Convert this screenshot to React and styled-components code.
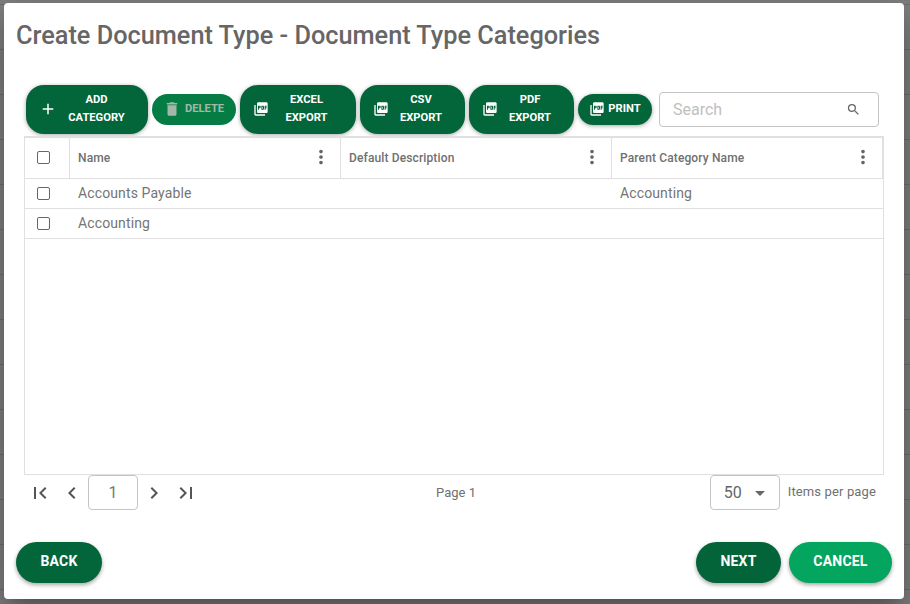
import React from 'react'
import styled, { createGlobalStyle } from 'styled-components'
import {
    MdAdd,
    MdDelete,
    MdPictureAsPdf,
    MdSearch,
    MdMoreVert,
    MdFirstPage,
    MdLastPage,
    MdChevronLeft,
    MdChevronRight,
    MdArrowDropDown,
    MdEdit,
    MdContentCopy
} from 'react-icons/md'

const GlobalStyle = createGlobalStyle`
    html, body {
        margin: 0;
        padding: 0;
        height: 100%;
        overflow: hidden;
        background: #fff;
        font-family: Roboto, "Liberation Sans", sans-serif;
    }
`

const Screen = styled.div`
    position: relative;
    width: 910px;
    height: 604px;
    overflow: hidden;
`

const BackPage = styled.div`
    display: flex;
    flex-direction: column;
    padding-top: 4px;
`

const BackRow = styled.div`
    display: grid;
    grid-template-columns: 87px 434px 1fr;
    flex: 0 0 44px;
    box-sizing: border-box;
    border-top: 1px solid #ddd;
    font-size: 16px;
    color: #333;
`

const BackCell = styled.div`
    display: flex;
    align-items: center;
    gap: 24px;
    padding-left: 8px;
    border-left: ${p => (p.$divided ? '1px solid #ddd' : 'none')};
    height: 44px;
    svg { flex: none; }
`

const Backdrop = styled.div`
    position: absolute;
    inset: 0;
    display: flex;
    padding: 3px 6px 5px 4px;
    background: rgba(0, 0, 0, .5);
`

const Dialog = styled.div`
    flex: 1;
    display: flex;
    flex-direction: column;
    background: #fff;
    border-radius: 4px;
    padding: 16px 12px 16px 12px;
    color: #666;
    box-shadow: 0 11px 15px -7px rgba(0, 0, 0, .2), 0 24px 38px 3px rgba(0, 0, 0, .14), 0 9px 46px 8px rgba(0, 0, 0, .12);
`

const Title = styled.h2`
    margin: 0 0 33px;
    height: 33px;
    line-height: 33px;
    font-size: 25.3px;
    font-weight: 500;
    color: #666;
`

const Toolbar = styled.div`
    display: flex;
    align-items: center;
    gap: 4px;
    height: 49px;
    margin: 0 0 2px 10px;
`

const ToolButton = styled.button`
    display: flex;
    align-items: center;
    flex: none;
    box-sizing: border-box;
    width: ${p => p.$width}px;
    height: ${p => (p.$tall ? 49 : 31)}px;
    padding: 0 ${p => (p.$tall ? 12 : 8)}px 1px ${p => (p.$tall ? 13 : 11)}px;
    border: none;
    border-radius: ${p => (p.$tall ? 18 : 15.5)}px;
    background: ${p => (p.disabled ? '#067c45' : '#03663a')};
    color: ${p => (p.disabled ? '#a3b8ab' : '#fff')};
    font-family: inherit;
    font-size: 11.2px;
    font-weight: 700;
    line-height: 18px;
    text-transform: uppercase;
    box-shadow: ${p => (p.disabled ? 'none' : '0 1px 4px rgba(0, 0, 0, .35)')};
    svg { flex: none; }
`

const ToolLabel = styled.span`
    flex: 1;
    text-align: center;
`

const SearchBox = styled.div`
    display: flex;
    align-items: center;
    justify-content: space-between;
    box-sizing: border-box;
    width: 220px;
    height: 35px;
    margin-left: 3px;
    padding: 0 17px 0 13px;
    border: 1px solid #c4c4c4;
    border-radius: 4px;
    font-size: 16px;
    color: #c0c0c0;
    svg { color: #666; }
`

const Grid = styled.div`
    display: flex;
    flex-direction: column;
    box-sizing: border-box;
    height: 339px;
    margin-left: 8px;
    width: 860px;
    border: 1px solid #e0e0e0;
    border-top-width: 2px;
`

const HeaderRow = styled.div`
    display: grid;
    grid-template-columns: 45px 271px 271px 1fr;
    height: 41px;
    box-sizing: border-box;
    border-bottom: 1px solid #e0e0e0;
    border-right: 1px solid #e0e0e0;
`

const HeaderCell = styled.div`
    display: flex;
    align-items: center;
    justify-content: space-between;
    padding: 0 8px 0 8px;
    border-right: ${p => (p.$last ? 'none' : '1px solid #e0e0e0')};
    font-size: 12px;
    font-weight: 500;
    letter-spacing: .13px;
    color: #707070;
    svg { color: #666; margin-bottom: 3px; }
`

const CheckCell = styled.div`
    display: flex;
    align-items: center;
    justify-content: center;
    padding: 0 8px 1px 0;
    border-right: ${p => (p.$divided ? '1px solid #e0e0e0' : 'none')};
`

const Box = styled.span`
    display: block;
    box-sizing: border-box;
    width: 13px;
    height: 13px;
    border: 1px solid #666;
    border-radius: 2px;
    background: #fff;
`

const Row = styled.div`
    display: grid;
    grid-template-columns: 45px 271px 271px 1fr;
    height: 30px;
    box-sizing: border-box;
    border-bottom: 1px solid #e0e0e0;
    font-size: 14px;
    letter-spacing: .12px;
    color: #757575;
`

const Cell = styled.div`
    display: flex;
    align-items: center;
    padding: 0 0 2px 8px;
`

const Pager = styled.div`
    display: grid;
    grid-template-columns: 1fr 1fr 1fr;
    align-items: center;
    height: 35px;
    margin: 0 0 0 8px;
    width: 860px;
`

const PagerNav = styled.div`
    display: flex;
    align-items: center;
    padding-left: 4px;
    color: #555;
`

const NavIcon = styled.span`
    display: flex;
    align-items: center;
    justify-content: center;
    width: ${p => p.$width}px;
    padding-left: ${p => p.$shift || 0}px;
    box-sizing: border-box;
`

const PageInput = styled.div`
    display: flex;
    align-items: center;
    justify-content: center;
    box-sizing: border-box;
    width: 50px;
    height: 35px;
    border: 1px solid #c4c4c4;
    border-radius: 4px;
    font-size: 16px;
    color: #777;
`

const PageInfo = styled.div`
    text-align: center;
    font-size: 13px;
    color: #707070;
    padding: 0 0 1px 4px;
`

const PageSize = styled.div`
    display: flex;
    align-items: center;
    justify-content: flex-end;
    gap: 8px;
    padding: 0 8px 0 0;
    font-size: 13px;
    letter-spacing: .13px;
    color: #707070;
`

const PageSizeLabel = styled.span`
    padding-bottom: 2px;
`

const SizeSelect = styled.div`
    display: flex;
    align-items: center;
    justify-content: space-between;
    box-sizing: border-box;
    width: 70px;
    height: 35px;
    padding: 0 7px 0 13px;
    border: 1px solid #c4c4c4;
    border-radius: 4px;
    font-size: 16px;
    color: #666;
`

const Footer = styled.div`
    display: flex;
    align-items: center;
    gap: 8px;
    margin-top: 32px;
`

const FooterButton = styled.button`
    box-sizing: border-box;
    width: ${p => p.$width}px;
    height: 41px;
    padding: 0 0 3px;
    margin-right: ${p => (p.$pushLeft ? 'auto' : 0)};
    border: none;
    border-radius: 20.5px;
    background: ${p => p.$color};
    color: #fff;
    font-family: inherit;
    font-size: 14px;
    font-weight: 700;
    letter-spacing: .2px;
    text-transform: uppercase;
    box-shadow: 0 2px 4px rgba(0, 0, 0, .35);
`

const tools = [
    { label: ['Excel', 'Export'], width: 116 },
    { label: ['CSV', 'Export'], width: 105 },
    { label: ['PDF', 'Export'], width: 105 }
]

const columns = ['Name', 'Default Description', 'Parent Category Name']

const rows = [
    { name: 'Accounts Payable', description: '', parent: 'Accounting' },
    { name: 'Accounting', description: '', parent: '' }
]

const TwoLines = ({ lines }) => (
    <ToolLabel>
        {lines[0]}
        <br />
        {lines[1]}
    </ToolLabel>
)

const App = () => {
    return (
        <Screen>
            <GlobalStyle />
            <BackPage>
                {Array.from({ length: 14 }).map((_, i) => (
                    <BackRow key={i}>
                        <BackCell>
                            {i === 13 && <MdEdit size={18} />}
                            {i === 13 && <MdContentCopy size={14} />}
                        </BackCell>
                        <BackCell $divided={i < 1}>{i === 13 && 'Application for Employment'}</BackCell>
                        <BackCell $divided={i < 1}>{i === 13 && 'Employee Application'}</BackCell>
                    </BackRow>
                ))}
            </BackPage>
            <Backdrop>
                <Dialog>
                    <Title>Create Document Type - Document Type Categories</Title>
                    <Toolbar>
                        <ToolButton $tall $width={122}>
                            <MdAdd size={18} />
                            <TwoLines lines={['Add', 'Category']} />
                        </ToolButton>
                        <ToolButton disabled $width={84}>
                            <MdDelete size={18} />
                            <ToolLabel>Delete</ToolLabel>
                        </ToolButton>
                        {tools.map(tool => (
                            <ToolButton $tall $width={tool.width} key={tool.label[0]}>
                                <MdPictureAsPdf size={16} />
                                <TwoLines lines={tool.label} />
                            </ToolButton>
                        ))}
                        <ToolButton $width={74}>
                            <MdPictureAsPdf size={16} />
                            <ToolLabel>Print</ToolLabel>
                        </ToolButton>
                        <SearchBox>
                            Search
                            <MdSearch size={15} />
                        </SearchBox>
                    </Toolbar>
                    <Grid>
                        <HeaderRow>
                            <CheckCell $divided><Box /></CheckCell>
                            {columns.map((title, i) => (
                                <HeaderCell key={title} $last={i === columns.length - 1}>
                                    {title}
                                    <MdMoreVert size={22} />
                                </HeaderCell>
                            ))}
                        </HeaderRow>
                        {rows.map(row => (
                            <Row key={row.name}>
                                <CheckCell><Box /></CheckCell>
                                <Cell>{row.name}</Cell>
                                <Cell>{row.description}</Cell>
                                <Cell>{row.parent}</Cell>
                            </Row>
                        ))}
                    </Grid>
                    <Pager>
                        <PagerNav>
                            <NavIcon $width={24}><MdFirstPage size={24} /></NavIcon>
                            <NavIcon $width={36} $shift={4}><MdChevronLeft size={24} /></NavIcon>
                            <PageInput>1</PageInput>
                            <NavIcon $width={32}><MdChevronRight size={24} /></NavIcon>
                            <NavIcon $width={32}><MdLastPage size={24} /></NavIcon>
                        </PagerNav>
                        <PageInfo>Page 1</PageInfo>
                        <PageSize>
                            <SizeSelect>
                                50
                                <MdArrowDropDown size={24} />
                            </SizeSelect>
                            <PageSizeLabel>Items per page</PageSizeLabel>
                        </PageSize>
                    </Pager>
                    <Footer>
                        <FooterButton $width={86} $color="#03663a" $pushLeft>Back</FooterButton>
                        <FooterButton $width={85} $color="#03643a">Next</FooterButton>
                        <FooterButton $width={103} $color="#04a55f">Cancel</FooterButton>
                    </Footer>
                </Dialog>
            </Backdrop>
        </Screen>
    )
}

export default App
